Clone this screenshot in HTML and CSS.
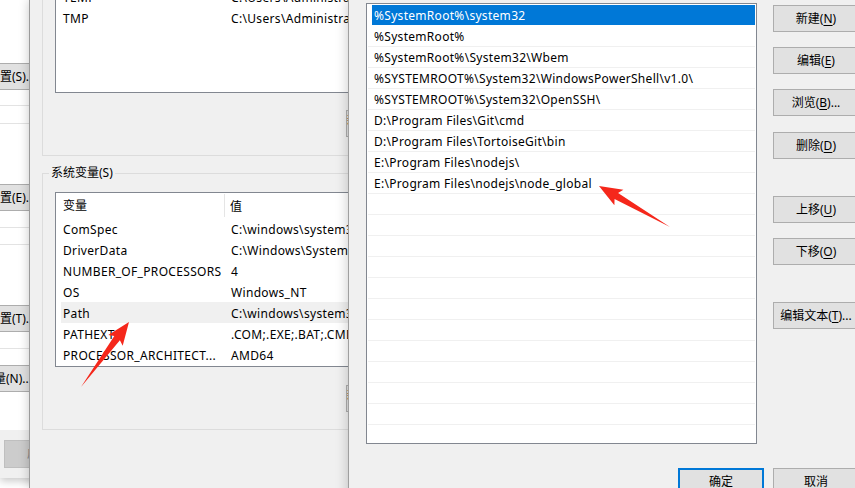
FILE: index.html
```html
<!DOCTYPE html>
<html lang="zh-CN">
<head>
<meta charset="utf-8">
<title>编辑环境变量</title>
<link rel="stylesheet" href="styles.css">
</head>
<body>
<div class="win back">
  <div class="back-page">
    <div class="bbtn b1"><span>设置(S)...</span></div>
    <div class="bline l1"></div>
    <div class="bline l2"></div>
    <div class="bbtn b2"><span>设置(E)...</span></div>
    <div class="bline l3"></div>
    <div class="bline l4"></div>
    <div class="bbtn b3"><span>设置(T)...</span></div>
    <div class="bline l5"></div>
    <div class="bbtn b4"><span>环境变量(N)...</span></div>
  </div>
  <div class="back-foot">
    <div class="dbtn"><span>应用(A)</span></div>
  </div>
</div>

<div class="win mid">
  <div class="group g1">
    <div class="list ulist">
      <div class="lhead"><span class="c1">变量</span><span class="c2">值</span></div>
      <div class="lrow"><span class="c1">TEMP</span><span class="c2">C:\Users\Administrator\AppData\Local\Temp</span></div>
      <div class="lrow"><span class="c1">TMP</span><span class="c2">C:\Users\Administrator\AppData\Local\Temp</span></div>
    </div>
    <div class="gbtns"><div class="wbtn">新建(N)...</div></div>
  </div>
  <div class="group g2">
    <div class="gtitle">系统变量(S)</div>
    <div class="list slist">
      <div class="lhead"><span class="c1">变量</span><span class="c2">值</span></div>
      <div class="lrow"><span class="c1">ComSpec</span><span class="c2">C:\windows\system32\cmd.exe</span></div>
      <div class="lrow"><span class="c1">DriverData</span><span class="c2">C:\Windows\System32\Drivers\DriverData</span></div>
      <div class="lrow"><span class="c1">NUMBER_OF_PROCESSORS</span><span class="c2">4</span></div>
      <div class="lrow"><span class="c1">OS</span><span class="c2">Windows_NT</span></div>
      <div class="lrow hl"><span class="c1">Path</span><span class="c2">C:\windows\system32;C:\windows;C:\windows\System32\Wbem</span></div>
      <div class="lrow"><span class="c1">PATHEXT</span><span class="c2">.COM;.EXE;.BAT;.CMD;.VBS;.VBE;.JS</span></div>
      <div class="lrow"><span class="c1">PROCESSOR_ARCHITECT...</span><span class="c2">AMD64</span></div>
    </div>
    <div class="gbtns"><div class="wbtn">新建(W)...</div></div>
  </div>
</div>

<div class="win front">
  <div class="front-main">
    <div class="pathlist">
      <div class="prow sel"><span class="t">%SystemRoot%\system32</span></div>
      <div class="prow"><span class="t">%SystemRoot%</span></div>
      <div class="prow"><span class="t">%SystemRoot%\System32\Wbem</span></div>
      <div class="prow"><span class="t">%SYSTEMROOT%\System32\WindowsPowerShell\v1.0\</span></div>
      <div class="prow"><span class="t">%SYSTEMROOT%\System32\OpenSSH\</span></div>
      <div class="prow"><span class="t">D:\Program Files\Git\cmd</span></div>
      <div class="prow"><span class="t">D:\Program Files\TortoiseGit\bin</span></div>
      <div class="prow"><span class="t">E:\Program Files\nodejs\</span></div>
      <div class="prow"><span class="t">E:\Program Files\nodejs\node_global</span></div>
      <div class="prow"><span class="t"></span></div>
      <div class="prow"><span class="t"></span></div>
      <div class="prow"><span class="t"></span></div>
      <div class="prow"><span class="t"></span></div>
      <div class="prow"><span class="t"></span></div>
      <div class="prow"><span class="t"></span></div>
      <div class="prow"><span class="t"></span></div>
      <div class="prow"><span class="t"></span></div>
      <div class="prow"><span class="t"></span></div>
      <div class="prow"><span class="t"></span></div>
      <div class="prow"><span class="t"></span></div>
      <div class="prow"><span class="t"></span></div>
    </div>
    <div class="btncol">
      <div class="btn bt-new">新建(<u>N</u>)</div>
      <div class="btn bt-edit">编辑(<u>E</u>)</div>
      <div class="btn bt-browse">浏览(<u>B</u>)...</div>
      <div class="btn bt-del">删除(<u>D</u>)</div>
      <div class="btn bt-up">上移(<u>U</u>)</div>
      <div class="btn bt-down">下移(<u>O</u>)</div>
      <div class="btn bt-text">编辑文本(<u>T</u>)...</div>
    </div>
  </div>
  <div class="front-foot">
    <div class="btn ok">确定</div>
    <div class="btn">取消</div>
  </div>
</div>

<svg class="arrows" width="855" height="488" viewBox="0 0 855 488">
  <polygon fill="#f5271b" points="81,387 119.9,340.2 122.7,345.7 129,322 108.3,335.1 114.3,336"/>
  <polygon fill="#f5271b" points="670,227 618.05,192.97 623.4,189.7 599,186 614.4,205.3 614.55,199.03"/>
</svg>
</body>
</html>
```
FILE: styles.css
```css
* { box-sizing: border-box; }
html, body { margin: 0; padding: 0; }
body {
  width: 855px;
  height: 488px;
  overflow: hidden;
  position: relative;
  background: #fff;
  font-family: "Noto Sans", "Noto Sans CJK SC", sans-serif;
  font-size: 12px;
  color: #000;
}
.win { position: absolute; top: 0; }

/* back window */
.back {
  left: 0;
  width: 60px;
  height: 478px;
  background: #fff;
  box-shadow: 0 3px 8px rgba(0,0,0,.22);
  display: flex;
  flex-direction: column;
  z-index: 1;
  overflow: hidden;
}
.back-page { height: 430px; background: #fff; display: flex; flex-direction: column; }
.bbtn {
  height: 27px;
  width: 120px;
  margin-left: -60px;
  background: #e1e1e1;
  border: 1px solid #adadad;
  line-height: 25px;
  white-space: nowrap;
  padding-left: 47px;
  flex: none;
}
.b1 { margin-top: 63px; }
.b2 { margin-top: 60px; }
.b3 { margin-top: 60px; }
.b4 { margin-top: 16px; padding-left: 17px; }
.bline { height: 1px; background: #e3e3e3; flex: none; }
.l1 { margin-top: 15px; }
.l2 { margin-top: 17px; }
.l3 { margin-top: 16px; }
.l4 { margin-top: 16px; }
.l5 { margin-top: 16px; }
.back-foot { height: 48px; background: #f0f0f0; padding: 10px 0 0 4px; }
.dbtn {
  width: 75px;
  height: 28px;
  background: #cccccc;
  border: 1px solid #bfbfbf;
  color: #838383;
  line-height: 26px;
  padding-left: 22px;
  white-space: nowrap;
}

/* middle window */
.mid {
  left: 29px;
  width: 360px;
  height: 488px;
  background: #f0f0f0;
  border-left: 1px solid #9a9a9a;
  padding-left: 12px;
  box-shadow: 0 0 10px rgba(0,0,0,.22);
  z-index: 2;
  overflow: hidden;
}
.group { border: 1px solid #dcdcdc; width: 560px; padding-left: 12px; }
.g1 { margin-top: -60px; padding-top: 19px; padding-bottom: 18px; }
.g2 { margin-top: 17px; padding-bottom: 17px; }
.gtitle {
  display: table;
  margin: -9px 0 0 -6px;
  padding: 0 2px;
  background: #f0f0f0;
  line-height: 16px;
}
.list { background: #fff; border: 1px solid #828790; overflow: hidden; }
.ulist { height: 133px; }
.slist { height: 175px; margin-top: 11px; }
.lhead { height: 25px; display: flex; align-items: center; padding-left: 7px; }
.lhead .c1 { width: 162px; height: 23px; line-height: 23px; border-right: 1px solid #e5e5e5; }
.lhead .c2 { padding-left: 5px; }
.lrow {
  height: 21px;
  display: flex;
  align-items: center;
  margin-left: 5px;
  padding: 1px 0 0 2px;
  white-space: nowrap;
  letter-spacing: 0.33px;
}
.lrow .c1 { width: 168px; flex: none; }
.lrow.hl { background: #f0f0f0; }
.gbtns { height: 27px; margin-top: 17px; padding-left: 291px; }
.g2 .gbtns { margin-top: 18px; }
.wbtn { width: 75px; height: 27px; background: #e1e1e1; border: 1px solid #adadad; }

/* front window */
.front {
  left: 348px;
  width: 520px;
  height: 500px;
  background: #f0f0f0;
  border-left: 1px solid #9f9f9f;
  padding: 3px 0 0 17px;
  box-shadow: 0 0 12px rgba(0,0,0,.22);
  z-index: 3;
}
.front-main { display: flex; }
.pathlist {
  width: 391px;
  height: 441px;
  background: #fff;
  border: 1px solid #828790;
  padding: 1px 1px 0;
  overflow: hidden;
  flex: none;
}
.prow { height: 21px; border-bottom: 1px solid #f0f0f0; padding-left: 4px; }
.prow .t {
  display: block;
  height: 20px;
  line-height: 20px;
  padding: 1px 0 0 2px;
  white-space: nowrap;
  letter-spacing: 0.3px;
}
.prow.sel { border-bottom-color: #fff; }
.prow.sel .t { background: #0078d7; color: #fff; }
.btncol { margin-left: 16px; padding-top: 2px; display: flex; flex-direction: column; }
.btn {
  width: 86px;
  height: 27px;
  background: #e1e1e1;
  border: 1px solid #adadad;
  line-height: 25px;
  text-align: center;
  white-space: nowrap;
  flex: none;
}
.btn u { text-underline-offset: 2px; }
.bt-edit, .bt-browse { margin-top: 15px; }
.bt-del { margin-top: 16px; }
.bt-up { margin-top: 37px; }
.bt-down { margin-top: 15px; }
.bt-text { margin-top: 37px; }
.front-foot { display: flex; gap: 9px; margin: 24px 0 0 312px; }
.btn.ok { border: 2px solid #0078d7; line-height: 23px; }

.arrows { position: absolute; left: 0; top: 0; z-index: 10; pointer-events: none; }
```
